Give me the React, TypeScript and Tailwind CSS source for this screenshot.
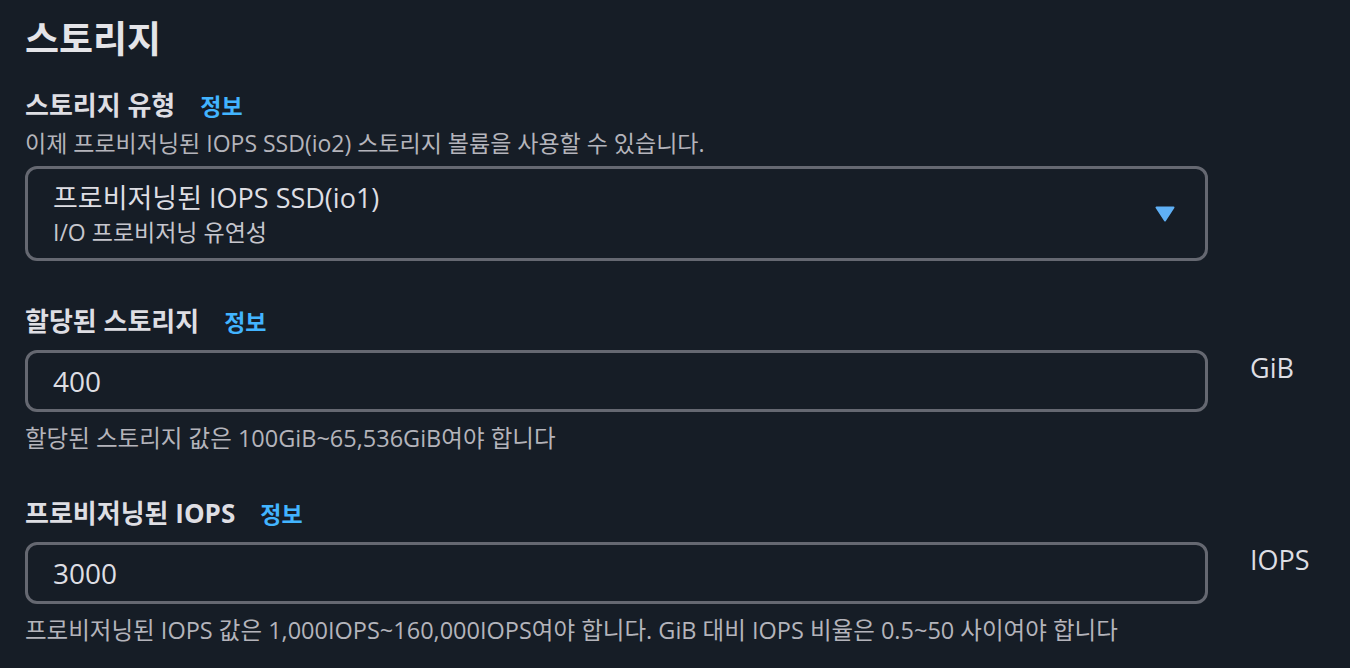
import React from 'react';

const FONT = { fontFamily: '"Open Sans", "Noto Sans CJK KR", sans-serif' };

function InfoLink() {
  return <a className="ml-[25px] text-[23px] font-bold text-[#42b4ff]">정보</a>;
}

function Label({ children }: { children: React.ReactNode }) {
  return (
    <div className="flex items-baseline leading-[36px]">
      <span className="text-[26px] font-bold text-[#dedee3]">{children}</span>
      <InfoLink />
    </div>
  );
}

function NumberField({ value, unit }: { value: string; unit: string }) {
  return (
    <div className="flex items-start">
      <div className="flex h-[62px] w-[1183px] items-center rounded-[12px] border-[3px] border-[#656871] px-[25px]">
        <span className="text-[28px] leading-[36px] text-[#dedee3]">{value}</span>
      </div>
      <span className="ml-[42px] text-[27px] leading-[36px] text-[#dedee3]">{unit}</span>
    </div>
  );
}

export default function App() {
  return (
    <div className="min-h-screen w-full bg-[#161d26] pl-[25px]" style={FONT}>
      <h2 className="pt-[17px] text-[37px] font-bold leading-[44px] text-[#e4e4e8]">스토리지</h2>

      {/* 스토리지 유형 */}
      <div className="mt-[26px]">
        <Label>스토리지 유형</Label>
        <p className="mt-[3px] text-[23px] leading-[32px] text-[#b4b4bb]">
          이제 프로비저닝된 IOPS SSD(io2) 스토리지 볼륨을 사용할 수 있습니다.
        </p>
        <div className="mt-[7px] flex h-[95px] w-[1183px] items-center justify-between rounded-[12px] border-[3px] border-[#656871] pl-[25px] pr-[30px]">
          <div className="flex flex-col gap-[2px]">
            <span className="text-[27px] leading-[34px] text-[#dedee3]">프로비저닝된 IOPS SSD(io1)</span>
            <span className="text-[23px] leading-[30px] text-[#c6c6cd]">I/O 프로비저닝 유연성</span>
          </div>
          <svg width="20" height="16" viewBox="0 0 20 16">
            <path d="M1.5 1.5h17L10 14.5z" fill="#5fb0f5" stroke="#5fb0f5" strokeWidth="2" strokeLinejoin="round" />
          </svg>
        </div>
      </div>

      {/* 할당된 스토리지 */}
      <div className="mt-[42px]">
        <Label>할당된 스토리지</Label>
        <div className="mt-[10px]">
          <NumberField value="400" unit="GiB" />
        </div>
        <p className="mt-[10px] text-[23.5px] leading-[32px] text-[#b4b4bb]">
          할당된 스토리지 값은 100GiB~65,536GiB여야 합니다
        </p>
      </div>

      {/* 프로비저닝된 IOPS */}
      <div className="mt-[41px]">
        <Label>프로비저닝된 IOPS</Label>
        <div className="mt-[10px]">
          <NumberField value="3000" unit="IOPS" />
        </div>
        <p className="mt-[10px] text-[23.5px] leading-[32px] text-[#b4b4bb]">
          프로비저닝된 IOPS 값은 1,000IOPS~160,000IOPS여야 합니다. GiB 대비 IOPS 비율은 0.5~50 사이여야 합니다
        </p>
      </div>
    </div>
  );
}
